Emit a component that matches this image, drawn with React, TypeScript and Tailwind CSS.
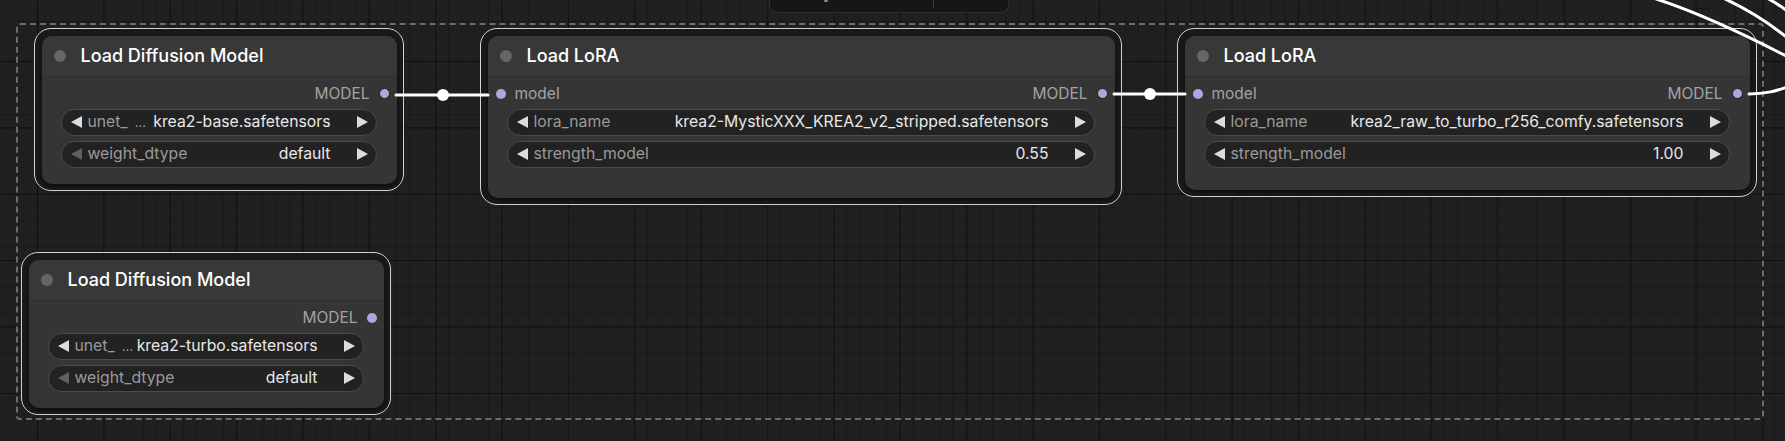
import React from 'react';

type Widget = {
  label: string;
  value: string;
  clipped?: boolean;
  firstOption?: boolean;
};

type GraphNode = {
  id: string;
  x: number;
  y: number;
  w: number;
  h: number;
  title: string;
  hasInput: boolean;
  linked: boolean;
  widgets: Widget[];
};

const NODES: GraphNode[] = [
  {
    id: 'unet-base',
    x: 42,
    y: 36,
    w: 354,
    h: 147,
    title: 'Load Diffusion Model',
    hasInput: false,
    linked: true,
    widgets: [
      { label: 'unet_', value: 'krea2-base.safetensors', clipped: true },
      { label: 'weight_dtype', value: 'default', firstOption: true },
    ],
  },
  {
    id: 'lora-mystic',
    x: 488,
    y: 36,
    w: 626,
    h: 161,
    title: 'Load LoRA',
    hasInput: true,
    linked: true,
    widgets: [
      { label: 'lora_name', value: 'krea2-MysticXXX_KREA2_v2_stripped.safetensors' },
      { label: 'strength_model', value: '0.55' },
    ],
  },
  {
    id: 'lora-turbo',
    x: 1185,
    y: 36,
    w: 564,
    h: 153,
    title: 'Load LoRA',
    hasInput: true,
    linked: true,
    widgets: [
      { label: 'lora_name', value: 'krea2_raw_to_turbo_r256_comfy.safetensors' },
      { label: 'strength_model', value: '1.00' },
    ],
  },
  {
    id: 'unet-turbo',
    x: 29,
    y: 260,
    w: 354,
    h: 147,
    title: 'Load Diffusion Model',
    hasInput: false,
    linked: false,
    widgets: [
      { label: 'unet_', value: 'krea2-turbo.safetensors', clipped: true },
      { label: 'weight_dtype', value: 'default', firstOption: true },
    ],
  },
];

const ArrowLeft = ({ dim }: { dim?: boolean }) => (
  <svg width="11" height="12" viewBox="0 0 11 12" className="shrink-0">
    <polygon points="11,0 11,12 0,6" fill={dim ? '#5f5f5f' : '#dcdcdc'} />
  </svg>
);

const ArrowRight = () => (
  <svg width="11" height="12" viewBox="0 0 11 12" className="shrink-0">
    <polygon points="0,0 0,12 11,6" fill="#dcdcdc" />
  </svg>
);

const ComboWidget = ({ widget }: { widget: Widget }) => (
  <div className="h-[27px] flex items-center pl-[9px] pr-[8px] rounded-full bg-[#222222] border border-[#4b4b4b] text-[15.75px] leading-none">
    <ArrowLeft dim={widget.firstOption} />
    <span className="ml-[6px] text-[#9a9a9a] whitespace-nowrap">{widget.label}</span>
    {widget.clipped && <span className="ml-[7px] text-[13px] text-[#9a9a9a]">…</span>}
    <span className="flex-1" />
    <span className="text-[#e8e8e8] whitespace-nowrap">{widget.value}</span>
    <span className="ml-[26px]">
      <ArrowRight />
    </span>
  </div>
);

const NodeCard = ({ node }: { node: GraphNode }) => (
  <div
    className="absolute p-[6.5px] rounded-[17px] border-[1.5px] border-[#d2d2d2] bg-[#191919]"
    style={{ left: node.x - 8, top: node.y - 8, width: node.w + 16, height: node.h + 16 }}
  >
    <div className="h-full flex flex-col rounded-[10px] bg-[#353535] overflow-hidden shadow-[0_2px_4px_rgba(0,0,0,0.5)]">
      {/* title bar */}
      <div className="h-[41px] shrink-0 flex items-center pl-3 gap-[15px] bg-[#383838] border-b border-[#2d2d2d]">
        <span className="w-3 h-3 rounded-full bg-[#666666]" />
        <span className="text-[18px] font-medium text-white leading-none">{node.title}</span>
      </div>

      {/* slots */}
      <div className="h-[28px] mt-[3px] flex items-center text-[15.5px] text-[#a3a3a3] leading-none">
        {node.hasInput && (
          <div className="flex items-center pl-2 gap-[9px]">
            <span className="w-[10px] h-[10px] rounded-full bg-[#b0a5de]" />
            <span>model</span>
          </div>
        )}
        <span className="flex-1" />
        <div className="flex items-center pr-[7px] gap-[9px]">
          <span>MODEL</span>
          <span
            className={
              node.linked
                ? 'w-[11px] h-[11px] rounded-full bg-[#b0a5de] border-[1.5px] border-[#1c1c1c]'
                : 'w-[10px] h-[10px] rounded-full bg-[#b0a5de]'
            }
          />
        </div>
      </div>

      {/* widgets */}
      <div className="mt-[1px] flex flex-col gap-[5px] pl-[19px] pr-[20px]">
        {node.widgets.map((w) => (
          <ComboWidget key={w.label} widget={w} />
        ))}
      </div>
    </div>
  </div>
);

const Links = () => (
  <svg className="absolute inset-0 pointer-events-none" width="1785" height="441" viewBox="0 0 1785 441">
    <g stroke="#ffffff" strokeWidth="3" fill="none" strokeLinecap="round">
      <line x1="396" y1="95" x2="488" y2="95" />
      <line x1="1114" y1="94" x2="1185" y2="94" />
      <path d="M1749 94 C1766 94 1776 91 1790 86" />
      <path d="M1650 -3 C1692 10 1742 33 1790 58" />
      <path d="M1721 -3 C1745 8 1766 20 1790 40" />
      <path d="M1765 -3 C1775 2 1782 7 1790 13" />
    </g>
    <circle cx="443" cy="95" r="6" fill="#ffffff" />
    <circle cx="1150" cy="94" r="6" fill="#ffffff" />
  </svg>
);

const App: React.FC = () => {
  return (
    <div
      className="relative w-[1785px] h-[441px] overflow-hidden bg-[#202020] font-['Inter','Noto_Sans',sans-serif] [background-image:linear-gradient(to_right,rgba(0,0,0,0.4)_1px,transparent_1px),linear-gradient(to_bottom,rgba(0,0,0,0.4)_1px,transparent_1px),linear-gradient(to_right,rgba(0,0,0,0.18)_1px,transparent_1px),linear-gradient(to_bottom,rgba(0,0,0,0.18)_1px,transparent_1px)] [background-size:66.4px_66.4px,66.4px_66.4px,13.28px_13.28px,13.28px_13.28px] [background-position:37px_61px,37px_61px,37px_61px,37px_61px]"
    >
      {/* group frame */}
      <div className="absolute left-[16px] top-[23px] w-[1748px] h-[397px] border-2 border-dashed border-[#6c6c6c] rounded-[4px]" />

      {/* selection toolbox, scrolled partly out of view */}
      <div className="absolute left-[769px] top-[-22px] w-[240px] h-[35px] flex items-end rounded-[8px] bg-[#161616] border border-[#2f2f2f]">
        <div className="w-[163px] h-full relative">
          <span className="absolute left-[54px] top-[21px] w-[4px] h-[2px] rounded-full bg-[#8a8a8a]" />
        </div>
        <div className="w-px h-[29px] self-start bg-[#3a3a3a]" />
      </div>

      {NODES.map((n) => (
        <NodeCard key={n.id} node={n} />
      ))}

      <Links />
    </div>
  );
};

export default App;
